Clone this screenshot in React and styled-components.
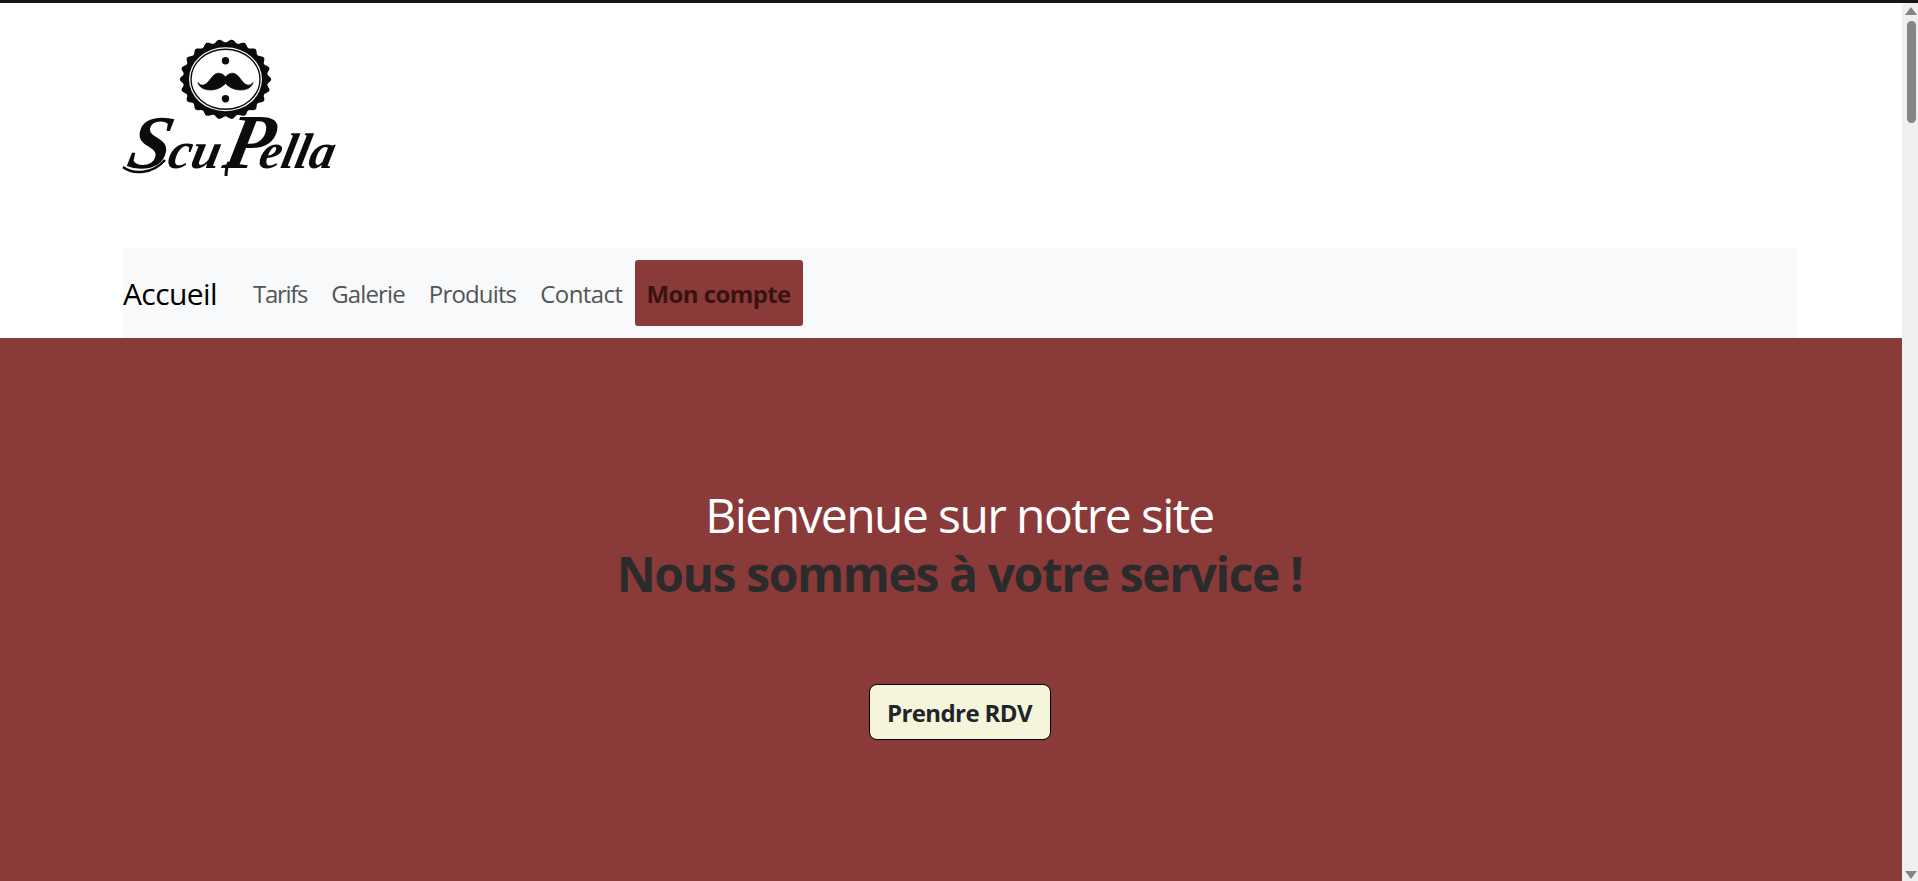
import React from "react";
import styled, { createGlobalStyle } from "styled-components";

const Global = createGlobalStyle`
  html, body { margin: 0; padding: 0; height: 100%; overflow: hidden; background: #fff; }
  #root { height: 100%; }
`;
const FONT = `"Open Sans", "Noto Sans", "Liberation Sans", sans-serif`;

const Page = styled.div`
  position: relative;
  width: 1918px;
  height: 881px;
  overflow: hidden;
  border-top: 3px solid #161616;
  box-sizing: border-box;
  font-family: ${FONT};
  display: flex;
  flex-direction: column;
`;
const Container = styled.div`
  width: 1674px;
  margin: 0 121px 0 123px;
`;
const Header = styled.header`
  height: 245px;
  padding-top: 27px;
  box-sizing: border-box;
  flex: none;
`;
const LogoSvg = styled.svg`
  display: block;
  width: 212px;
  height: 150px;
  overflow: visible;
`;
const LogoText = styled.text`
  font-family: "Liberation Serif", serif;
  font-style: italic;
  font-weight: 700;
  fill: #0b0b0b;
`;
const NavBar = styled.nav`
  flex: none;
  height: 90px;
  padding-top: 1px;
  box-sizing: border-box;
  background: #f8f9fa;
  display: flex;
  align-items: center;
`;
const Brand = styled.a`
  font-size: 30px;
  letter-spacing: -0.6px;
  color: #000;
  width: 118px;
  flex: none;
`;
const NavLinks = styled.div`
  display: flex;
  align-items: center;
`;
const NavLink = styled.a`
  font-size: 24px;
  letter-spacing: ${(p) => p.$spacing}px;
  padding: 12px;
  color: #555;
  white-space: nowrap;
`;
const AccountLink = styled.a`
  height: 66px;
  margin-top: -1px;
  box-sizing: border-box;
  display: flex;
  align-items: center;
  padding: 0 12px;
  background: #8b3a3a;
  border-radius: 3px;
  font-size: 24px;
  font-weight: 700;
  letter-spacing: -0.6px;
  color: #3a1212;
  white-space: nowrap;
`;
const Hero = styled.section`
  flex: 1;
  background: #8b3a3a;
  display: flex;
  flex-direction: column;
  align-items: center;
  padding: 148px 0 0 1px;
`;
const Title = styled.h1`
  margin: 0;
  text-align: center;
  font-weight: 400;
  font-size: 48px;
  line-height: 58px;
  letter-spacing: -1.6px;
  color: #fff;
`;
const TitleStrong = styled.strong`
  display: block;
  font-weight: 700;
  line-height: 60px;
  letter-spacing: -1.4px;
  color: #2b2b2b;
`;
const CTA = styled.button`
  margin-top: 80px;
  width: 182px;
  height: 56px;
  background: #f5f5dc;
  border: 1px solid #000;
  border-radius: 8px;
  font-family: ${FONT};
  font-size: 24px;
  font-weight: 700;
  letter-spacing: -0.6px;
  color: #212529;
`;
const Scrollbar = styled.div`
  position: absolute;
  top: 0;
  right: 0;
  bottom: 0;
  width: 16px;
  background: #f0f0f0;
  border-top-left-radius: 4px;
`;
const ScrollArrow = styled.div`
  position: absolute;
  right: 1px;
  ${(p) => (p.$down ? "bottom: 2px;" : "top: 4px;")}
  width: 0;
  height: 0;
  border-left: 6px solid transparent;
  border-right: 6px solid transparent;
  ${(p) => (p.$down ? "border-top: 8px solid #858585;" : "border-bottom: 8px solid #858585;")}
`;
const ScrollThumb = styled.div`
  position: absolute;
  top: 18px;
  right: 2px;
  width: 9px;
  height: 102px;
  border-radius: 5px;
  background: #858585;
`;

function scallopPath(cx, cy, rx, ry, amp, lobes) {
  const pts = [];
  for (let i = 0; i < 360; i++) {
    const a = (i / 360) * Math.PI * 2;
    const k = 1 + (amp / rx) * Math.cos(lobes * a);
    pts.push(`${(cx + rx * k * Math.cos(a)).toFixed(2)},${(cy + ry * k * Math.sin(a)).toFixed(2)}`);
  }
  return `M${pts.join("L")}Z`;
}

function Logo() {
  return (
    <LogoSvg viewBox="0 0 212 150" role="img" aria-label="ScuPella">
      <path d={scallopPath(102.5, 49.3, 44, 38.5, 1.7, 22)} fill="#0b0b0b" />
      <ellipse cx="102.500" cy="49.300" rx="36.500" ry="32" fill="#fff" />
      <ellipse cx="102.500" cy="49.300" rx="34.500" ry="30" fill="none" stroke="#0b0b0b" strokeWidth="1.400" />
      <circle cx="102.500" cy="30.700" r="3.700" fill="#0b0b0b" />
      <circle cx="102.500" cy="68.700" r="3.700" fill="#0b0b0b" />
      <path
        fill="#0b0b0b"
        stroke="#0b0b0b"
        strokeWidth="0.700"
        d="M102.500 47C104.500 44 109.500 42 112.500 44C117.500 47 119.500 54 124.500 55C126.500 55.500 128.500 54.500 130 52.500C129 57 124.500 60 117.500 60C110.500 60 105.500 56.500 102.500 53.500C99.500 56.500 94.500 60 87.500 60C80.500 60 76 57 75 52.500C76.500 54.500 78.500 55.500 80.500 55C85.500 54 87.500 47 92.500 44C95.500 42 100.500 44 102.500 47Z"
      />
      <LogoText transform="translate(2 138) skewX(-12)">
        <tspan x="0" y="0" fontSize="76">S</tspan>
        <tspan x="41" y="0" fontSize="52">cu</tspan>
        <tspan x="96" y="0" fontSize="78">P</tspan>
        <tspan x="132" y="0" fontSize="50">ella</tspan>
      </LogoText>
      <path d="M0 137C10 145 30 144 42 130" fill="none" stroke="#0b0b0b" strokeWidth="2.500" />
      <path d="M106 132C104 136 103 140 103 146" fill="none" stroke="#0b0b0b" strokeWidth="3" />
    </LogoSvg>
  );
}

export default function App() {
  return (
    <Page>
      <Global />
      <Header>
        <Container>
          <Logo />
        </Container>
      </Header>
      <Container as={NavBar}>
        <Brand>Accueil</Brand>
        <NavLinks>
          <NavLink $spacing={-1.3}>Tarifs</NavLink>
          <NavLink $spacing={-0.85}>Galerie</NavLink>
          <NavLink $spacing={-0.85}>Produits</NavLink>
          <NavLink $spacing={-0.55}>Contact</NavLink>
          <AccountLink>Mon compte</AccountLink>
        </NavLinks>
      </Container>
      <Hero>
        <Title>
          Bienvenue sur notre site
          <TitleStrong>Nous sommes à votre service !</TitleStrong>
        </Title>
        <CTA>Prendre RDV</CTA>
      </Hero>
      <Scrollbar>
        <ScrollArrow />
        <ScrollThumb />
        <ScrollArrow $down />
      </Scrollbar>
    </Page>
  );
}
